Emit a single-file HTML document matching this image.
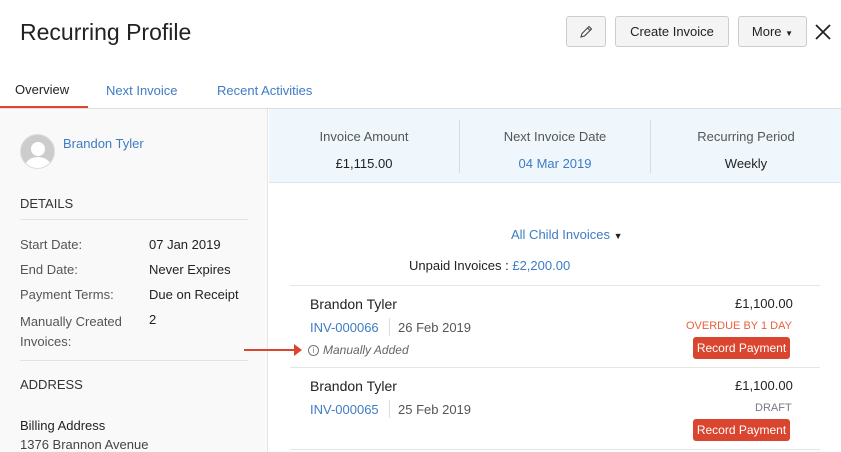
<!DOCTYPE html><html><head><style>
*{box-sizing:border-box;margin:0;padding:0}
body{width:841px;height:452px;overflow:hidden;font-family:"Liberation Sans",sans-serif;background:#fff;color:#222;position:relative;font-size:13px}
.a{position:absolute;white-space:nowrap}
.btn{position:absolute;top:16px;height:31px;border:1px solid #ccc;border-radius:3px;background:#f4f4f4;font-size:13px;line-height:29px;text-align:center;color:#222}
.blue{color:#3d7cc6}
.lbl{color:#555;font-size:13px}
.rp{position:absolute;left:693px;width:97px;height:22px;background:#d9452e;color:#fff;font-size:12px;line-height:22px;text-align:center;border-radius:3px}
</style></head><body>
<div class="a" style="left:20px;top:19px;font-size:23px;color:#222">Recurring Profile</div>
<div class="btn" style="left:566px;width:40px"><svg width="16" height="16" viewBox="0 0 16 16" style="margin-top:7px"><path d="M3 13l1-3.5 7-7 2.5 2.5-7 7z M9.5 4l2.5 2.5" fill="none" stroke="#444" stroke-width="1.1"/></svg></div>
<div class="btn" style="left:615px;width:114px">Create Invoice</div>
<div class="btn" style="left:738px;width:69px">More <span style="font-size:8px">▼</span></div>
<svg class="a" style="left:815px;top:24px" width="16" height="16"><path d="M1 1L15 15M15 1L1 15" stroke="#222" stroke-width="1.8"/></svg>
<div class="a" style="left:15px;top:82px;font-size:13px">Overview</div>
<div class="a blue" style="left:106px;top:83px;font-size:13px">Next Invoice</div>
<div class="a blue" style="left:217px;top:83px;font-size:13px">Recent Activities</div>
<div class="a" style="left:0;top:106px;width:88px;height:3px;background:#d9452e"></div>
<div class="a" style="left:0;top:108px;width:841px;height:1px;background:#ddd"></div>
<div class="a" style="left:0;top:109px;width:268px;height:343px;background:#f9f9f9;border-right:1px solid #e5e5e5"></div>
<div class="a" style="left:20px;top:134px;width:35px;height:35px;border-radius:50%;background:#ccc;border:1px solid #ddd;overflow:hidden"><div style="position:absolute;left:10px;top:7px;width:14px;height:14px;border-radius:50%;background:#fff"></div><div style="position:absolute;left:4px;top:22px;width:26px;height:20px;border-radius:50%;background:#fff"></div></div>
<div class="a blue" style="left:63px;top:136px;font-size:13px">Brandon Tyler</div>
<div class="a" style="left:20px;top:196px;font-size:13px;color:#333">DETAILS</div>
<div class="a" style="left:20px;top:219px;width:228px;height:1px;background:#e2e2e2"></div>
<div class="a lbl" style="left:20px;top:237px">Start Date:</div><div class="a" style="left:149px;top:237px">07 Jan 2019</div>
<div class="a lbl" style="left:20px;top:262px">End Date:</div><div class="a" style="left:149px;top:262px">Never Expires</div>
<div class="a lbl" style="left:20px;top:287px">Payment Terms:</div><div class="a" style="left:149px;top:287px">Due on Receipt</div>
<div class="a lbl" style="left:20px;top:312px;line-height:20px">Manually Created<br>Invoices:</div><div class="a" style="left:149px;top:312px">2</div>
<div class="a" style="left:20px;top:360px;width:228px;height:1px;background:#e2e2e2"></div>
<div class="a" style="left:20px;top:377px;color:#333">ADDRESS</div>
<div class="a" style="left:20px;top:418px">Billing Address</div>
<div class="a" style="left:20px;top:437px;color:#444">1376  Brannon Avenue</div>
<div class="a" style="left:269px;top:109px;width:572px;height:74px;background:#eff7fd;border-bottom:1px solid #dde5ea"></div>
<div class="a" style="left:459px;top:120px;width:1px;height:53px;background:#d5dde3"></div>
<div class="a" style="left:650px;top:120px;width:1px;height:53px;background:#d5dde3"></div>
<div class="a" style="left:269px;top:129px;width:190px;text-align:center;color:#555">Invoice Amount</div>
<div class="a" style="left:269px;top:156px;width:190px;text-align:center">£1,115.00</div>
<div class="a" style="left:460px;top:129px;width:190px;text-align:center;color:#555">Next Invoice Date</div>
<div class="a blue" style="left:460px;top:156px;width:190px;text-align:center">04 Mar 2019</div>
<div class="a" style="left:651px;top:129px;width:190px;text-align:center;color:#555">Recurring Period</div>
<div class="a" style="left:651px;top:156px;width:190px;text-align:center">Weekly</div>
<div class="a blue" style="left:511px;top:227px">All Child Invoices <span style="color:#222;font-size:9px">▼</span></div>
<div class="a" style="left:409px;top:258px">Unpaid Invoices :  <span class="blue">£2,200.00</span></div>
<div class="a" style="left:290px;top:285px;width:530px;height:1px;background:#e5e5e5"></div>
<div class="a" style="left:310px;top:296px;font-size:14px">Brandon Tyler</div>
<div class="a" style="left:735px;top:296px;font-size:13px">£1,100.00</div>
<div class="a blue" style="left:310px;top:320px">INV-000066</div>
<div class="a" style="left:389px;top:318px;width:1px;height:18px;background:#ddd"></div>
<div class="a" style="left:398px;top:320px;color:#555">26 Feb 2019</div>
<div class="a" style="left:686px;top:320px;font-size:11px;color:#e8603c">OVERDUE BY 1 DAY</div>
<div class="rp" style="top:337px">Record Payment</div>
<div class="a" style="left:244px;top:349px;width:55px;height:2px;background:#d9452e"></div>
<svg class="a" style="left:294px;top:344px" width="8" height="12"><path d="M0 0L8 6L0 12z" fill="#d9452e"/></svg>
<div class="a" style="left:308px;top:345px;width:11px;height:11px;border:1px solid #777;border-radius:50%;font-size:8px;text-align:center;line-height:9px;color:#777">i</div>
<div class="a" style="left:323px;top:343px;font-size:12px;font-style:italic;color:#666">Manually Added</div>
<div class="a" style="left:290px;top:367px;width:530px;height:1px;background:#e5e5e5"></div>
<div class="a" style="left:310px;top:378px;font-size:14px">Brandon Tyler</div>
<div class="a" style="left:735px;top:378px">£1,100.00</div>
<div class="a blue" style="left:310px;top:402px">INV-000065</div>
<div class="a" style="left:389px;top:400px;width:1px;height:18px;background:#ddd"></div>
<div class="a" style="left:398px;top:402px;color:#555">25 Feb 2019</div>
<div class="a" style="left:755px;top:402px;font-size:11px;color:#778">DRAFT</div>
<div class="rp" style="top:419px">Record Payment</div>
<div class="a" style="left:290px;top:449px;width:530px;height:1px;background:#e5e5e5"></div>
</body></html>
